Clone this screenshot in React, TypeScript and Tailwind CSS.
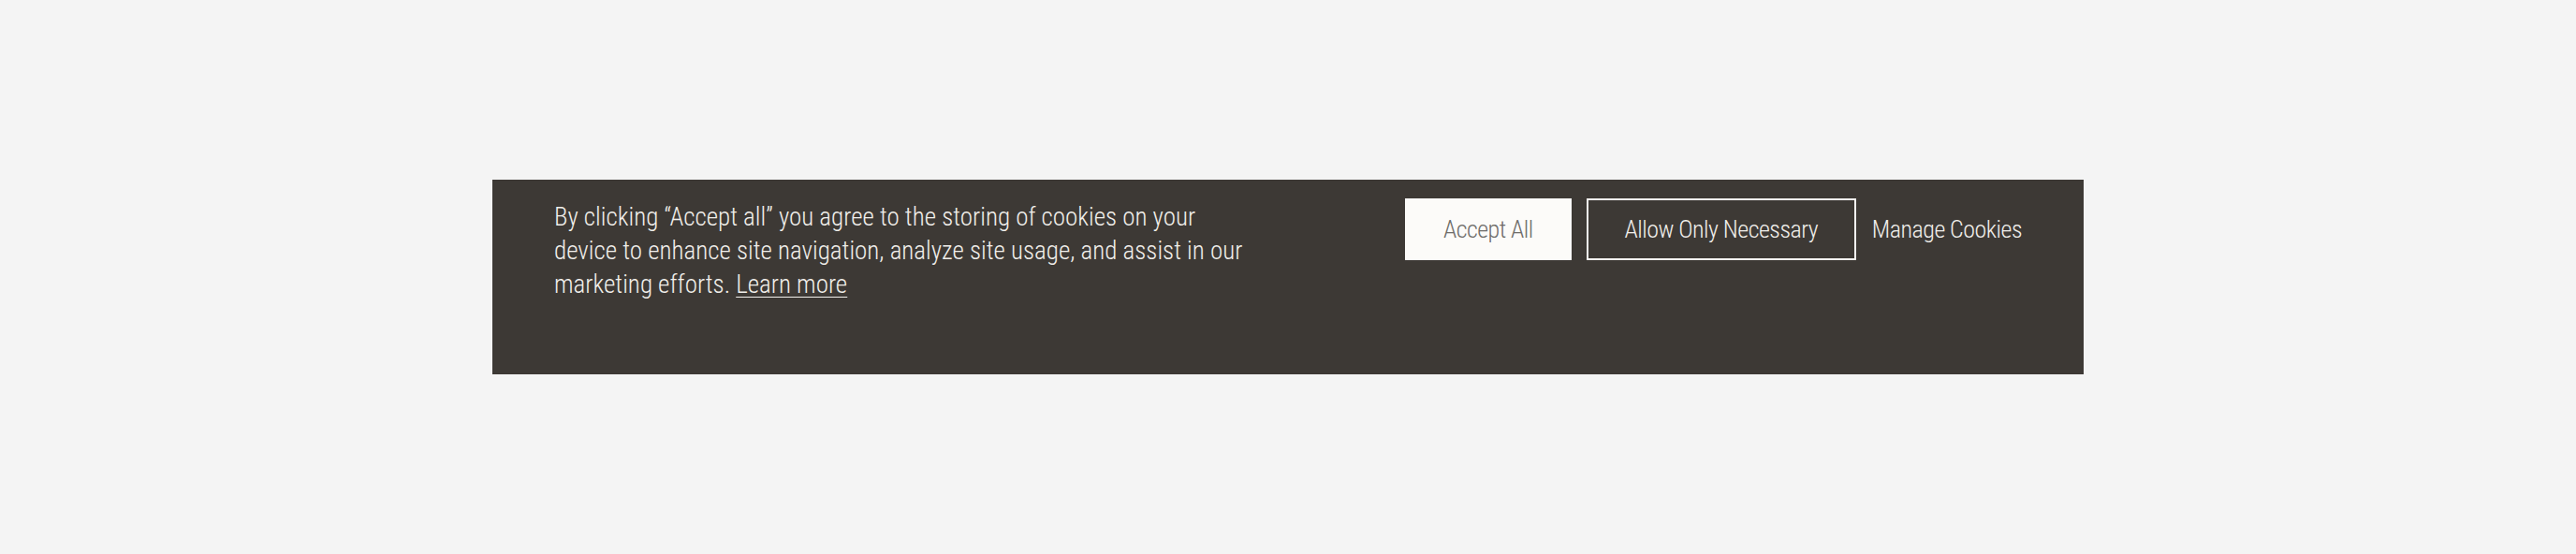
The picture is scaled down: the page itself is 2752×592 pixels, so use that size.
import React from 'react';

const font = {
  fontFamily: '"Roboto Condensed", "Liberation Sans Narrow", "DejaVu Sans Condensed", sans-serif',
};

export default function App() {
  return (
    <div className="flex h-screen w-full items-center justify-center bg-[#f4f4f4]" style={font}>
      <div className="flex h-[208px] w-[1700px] items-start justify-between bg-[#3d3935] px-[66px] pt-5">
        <p className="w-[740px] pt-[2px] text-[27px] font-light leading-[36px] text-[#f1efeb]">
          By clicking “Accept all” you agree to the storing of cookies on your device to enhance site
          navigation, analyze site usage, and assist in our marketing efforts.{' '}
          <a href="#" className="underline decoration-1 underline-offset-4">
            Learn more
          </a>
        </p>
        <div className="flex items-center gap-4">
          <button className="flex h-[66px] w-[178px] items-center justify-center bg-[#fcfbf9] text-[26px] font-light tracking-[-0.02em] text-[#6e6c69]">
            Accept All
          </button>
          <button className="flex h-[66px] w-[288px] items-center justify-center border-2 border-[#f6f4f1] text-[26px] font-light tracking-[-0.02em] text-[#f1efeb]">
            Allow Only Necessary
          </button>
          <button className="pl-px text-[26px] font-light tracking-[-0.02em] text-[#f1efeb]">Manage Cookies</button>
        </div>
      </div>
    </div>
  );
}
